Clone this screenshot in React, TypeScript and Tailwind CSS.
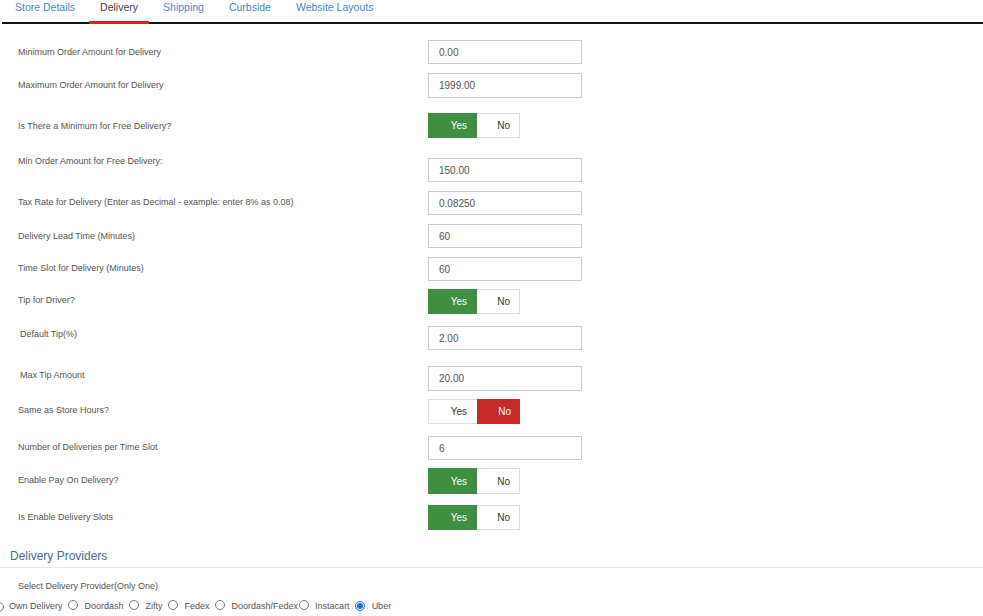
import React from 'react';

type Row = {
  label: string;
  kind: 'input' | 'toggle';
  value?: string;
  yes?: boolean;
  rowCls: string;
  labelCls: string;
};

const tabs = ['Store Details', 'Delivery', 'Shipping', 'Curbside', 'Website Layouts'];

const rows: Row[] = [
  { label: 'Minimum Order Amount for Delivery', kind: 'input', value: '0.00', rowCls: 'mt-[16px] h-[24px]', labelCls: 'mt-[7px] pl-[18px]' },
  { label: 'Maximum Order Amount for Delivery', kind: 'input', value: '1999.00', rowCls: 'mt-[9px] h-[25px]', labelCls: 'mt-[7px] pl-[18px]' },
  { label: 'Is There a Minimum for Free Delivery?', kind: 'toggle', yes: true, rowCls: 'mt-[15px] h-[25px]', labelCls: 'mt-[8px] pl-[18px]' },
  { label: 'Min Order Amount for Free Delivery:', kind: 'input', value: '150.00', rowCls: 'mt-[20px] h-[24px]', labelCls: 'mt-[-2px] pl-[18px]' },
  { label: 'Tax Rate for Delivery (Enter as Decimal - example: enter 8% as 0.08)', kind: 'input', value: '0.08250', rowCls: 'mt-[9px] h-[24px]', labelCls: 'mt-[6px] pl-[18px]' },
  { label: 'Delivery Lead Time (Minutes)', kind: 'input', value: '60', rowCls: 'mt-[9px] h-[24px]', labelCls: 'mt-[7px] pl-[18px]' },
  { label: 'Time Slot for Delivery (Minutes)', kind: 'input', value: '60', rowCls: 'mt-[9px] h-[24px]', labelCls: 'mt-[6px] pl-[18px]' },
  { label: 'Tip for Driver?', kind: 'toggle', yes: true, rowCls: 'mt-[8px] h-[25px]', labelCls: 'mt-[6px] pl-[18px]' },
  { label: 'Default Tip(%)', kind: 'input', value: '2.00', rowCls: 'mt-[12px] h-[24px]', labelCls: 'mt-[3px] pl-[20px]' },
  { label: 'Max Tip Amount', kind: 'input', value: '20.00', rowCls: 'mt-[16px] h-[25px]', labelCls: 'mt-[4px] pl-[20px]' },
  { label: 'Same as Store Hours?', kind: 'toggle', yes: false, rowCls: 'mt-[8px] h-[25px]', labelCls: 'mt-[6px] pl-[18px]' },
  { label: 'Number of Deliveries per Time Slot', kind: 'input', value: '6', rowCls: 'mt-[12px] h-[24px]', labelCls: 'mt-[6px] pl-[18px]' },
  { label: 'Enable Pay On Delivery?', kind: 'toggle', yes: true, rowCls: 'mt-[8px] h-[26px]', labelCls: 'mt-[7px] pl-[18px]' },
  { label: 'Is Enable Delivery Slots', kind: 'toggle', yes: true, rowCls: 'mt-[11px] h-[25px]', labelCls: 'mt-[7px] pl-[18px]' },
];

const providers = ['Own Delivery', 'Doordash', 'Zifty', 'Fedex', 'Doordash/Fedex', 'Instacart', 'Uber'];

function Toggle({ yes }: { yes?: boolean }) {
  return (
    <div className="flex h-full text-[10px]">
      <div
        className={
          yes
            ? 'w-[49px] h-full flex items-center justify-end pr-[10px] bg-[#3f8f42] text-white'
            : 'w-[49px] h-full flex items-center justify-end pr-[10px] bg-white text-[#333] border border-r-0 border-[#ddd]'
        }
      >
        Yes
      </div>
      <div
        className={
          yes
            ? 'w-[43px] h-full flex items-center justify-end pr-[9px] bg-white text-[#333] border border-l-0 border-[#ddd]'
            : 'w-[43px] h-full flex items-center justify-end pr-[9px] bg-[#c62a2a] text-white'
        }
      >
        No
      </div>
    </div>
  );
}

function Radio({ checked }: { checked?: boolean }) {
  return (
    <span
      className={
        checked
          ? 'inline-flex w-[10px] h-[10px] rounded-full border border-[#1a73e8] items-center justify-center shrink-0'
          : 'inline-flex w-[10px] h-[10px] rounded-full border border-[#777] shrink-0'
      }
    >
      {checked && <span className="w-[6px] h-[6px] rounded-full bg-[#1a73e8]" />}
    </span>
  );
}

export default function App() {
  return (
    <div className="w-[983px] h-[616px] bg-white overflow-hidden" style={{ fontFamily: '"Liberation Sans", Arial, sans-serif' }}>
      {/* Tabs */}
      <div className="flex gap-[3px] pl-[2px] ml-[2px] h-[24px] border-b-2 border-[#111]">
        {tabs.map((t) => (
          <div
            key={t}
            className={
              t === 'Delivery'
                ? 'px-[11px] pt-[1px] text-[10.5px] leading-[12px] text-[#444] border-b-[3px] border-[#d32424] -mb-[2px]'
                : 'px-[11px] pt-[1px] text-[10.5px] leading-[12px] text-[#4a86c6]'
            }
          >
            {t}
          </div>
        ))}
      </div>

      {/* Fields */}
      {rows.map((r) => (
        <div key={r.label} className={'flex ' + r.rowCls}>
          <div className={'w-[428px] shrink-0 text-[9px] leading-[11px] text-[#555] ' + r.labelCls}>{r.label}</div>
          {r.kind === 'input' ? (
            <div className="w-[154px] h-full border border-[#ccc] flex items-center pl-[10px] text-[10px] text-[#555]">
              {r.value}
            </div>
          ) : (
            <Toggle yes={r.yes} />
          )}
        </div>
      ))}

      {/* Providers */}
      <div className="mt-[19px] pl-[10px] pb-[4px] border-b border-[#e6e6e6] text-[12px] leading-[14px] text-[#4c6b90]">
        Delivery Providers
      </div>
      <div className="mt-[13px] pl-[18px] text-[9px] leading-[11px] text-[#555]">Select Delivery Provider(Only One)</div>
      <div className="mt-[8px] -ml-[6px] flex items-center text-[9px] leading-[11px] text-[#555]">
        <Radio />
        <span className="ml-[5px]">Own Delivery</span>
        {providers.slice(1).map((p) => (
          <React.Fragment key={p}>
            <span className={p === 'Instacart' ? 'ml-[1px] mr-[6px]' : 'ml-[5px] mr-[7px]'}>
              <Radio checked={p === 'Uber'} />
            </span>
            <span>{p}</span>
          </React.Fragment>
        ))}
      </div>
    </div>
  );
}
